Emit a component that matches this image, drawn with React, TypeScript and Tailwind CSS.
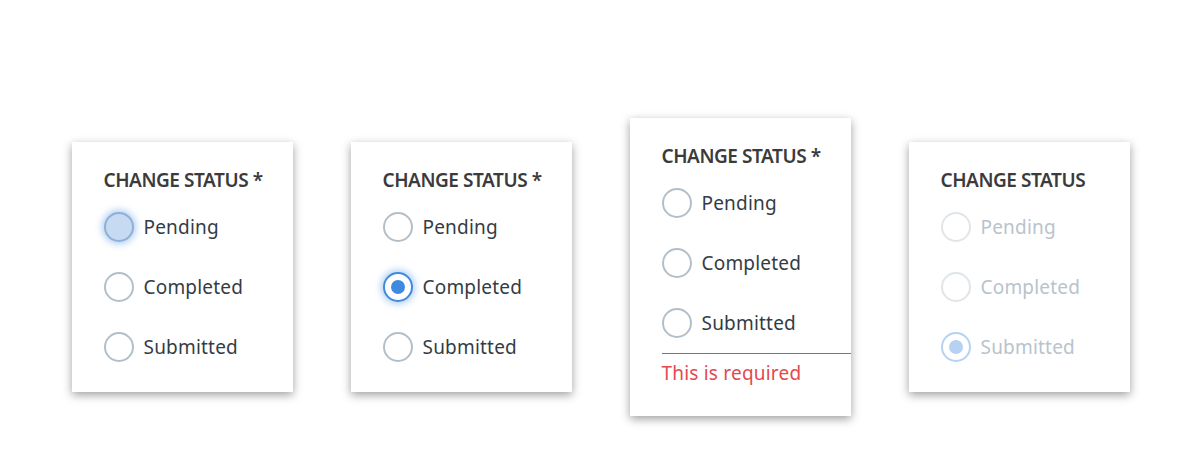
import { JSX } from "react";

type Kind = "focus" | "checked" | "idle" | "disabled" | "disabledChecked";

function Radio({ kind, label }: { kind: Kind; label: string }): JSX.Element {
  const ring =
    kind === "focus"
      ? "border-[#8fb0d6] bg-[#c6daf2] shadow-[0_0_7px_2px_rgba(74,144,226,0.45)]"
      : kind === "checked"
        ? "border-[#3f8ae0] bg-white shadow-[0_0_7px_2px_rgba(74,144,226,0.45)]"
        : kind === "disabled"
          ? "border-[#e0e5e9] bg-white"
          : kind === "disabledChecked"
            ? "border-[#b6d1f2] bg-white"
            : "border-[#b3bfc8] bg-white";
  const dot =
    kind === "checked" ? "bg-[#3f8ae0]" : kind === "disabledChecked" ? "bg-[#b6d1f2]" : "";
  const text = kind === "disabled" || kind === "disabledChecked" ? "text-[#b8c3cc]" : "text-[#333c45]";
  return (
    <div className="flex h-[60px] items-center gap-[10px]">
      <span className={`flex h-[30px] w-[30px] items-center justify-center rounded-full border-2 ${ring}`}>
        {dot && <span className={`h-[14px] w-[14px] rounded-full ${dot}`} />}
      </span>
      <span className={`text-[19px] leading-6 tracking-[0.2px] ${text}`}>{label}</span>
    </div>
  );
}

function Card({
  kinds,
  required = true,
  error = false,
}: {
  kinds: [Kind, Kind, Kind];
  required?: boolean;
  error?: boolean;
}): JSX.Element {
  const labels = ["Pending", "Completed", "Submitted"];
  return (
    <div className="w-[221px] bg-white pl-8 pt-6 shadow-[0_3px_9px_rgba(0,0,0,0.38)]">
      <div className="h-[28px] text-[19px] font-semibold leading-7 tracking-[-0.45px] text-[#3b3b3b]">
        CHANGE STATUS{required ? " *" : ""}
      </div>
      <div className={`mt-[3px] ${error ? "" : "pb-[15px]"}`}>
        {labels.map((l, i) => (
          <Radio key={l} kind={kinds[i]} label={l} />
        ))}
      </div>
      {error && (
        <>
          <div className="h-px bg-[#e5484d]" />
          <div className="pb-[31px] pt-[7px] text-[19px] leading-6 tracking-[0.2px] text-[#e5484d]">
            This is required
          </div>
        </>
      )}
    </div>
  );
}

export default function App(): JSX.Element {
  return (
    <div
      className="flex h-[476px] items-center justify-center gap-[58px] bg-white pt-[58px]"
      style={{ fontFamily: '"Noto Sans", "Open Sans", sans-serif' }}
    >
      <Card kinds={["focus", "idle", "idle"]} />
      <Card kinds={["idle", "checked", "idle"]} />
      <Card kinds={["idle", "idle", "idle"]} error />
      <Card kinds={["disabled", "disabled", "disabledChecked"]} required={false} />
    </div>
  );
}
